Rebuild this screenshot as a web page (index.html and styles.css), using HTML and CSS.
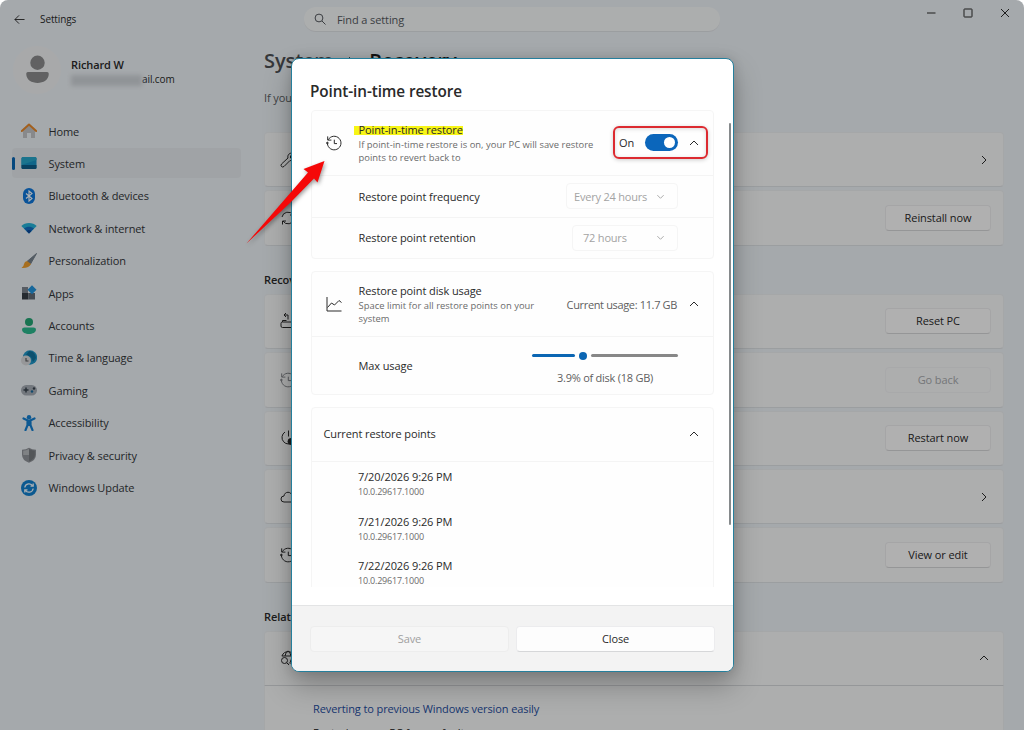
FILE: index.html
```
<!DOCTYPE html>
<html lang="en">
<head>
  <meta charset="UTF-8">
  <meta name="viewport" content="width=device-width, initial-scale=1.0">
  <title>Settings</title>
  <link rel="stylesheet" href="styles.css">
</head>
<body>
  <!-- Shared icons -->
  <svg class="sprite" width="0" height="0">
    <symbol id="up" viewBox="0 0 10 10"><path d="M1 7l4-4 4 4"/></symbol>
    <symbol id="down" viewBox="0 0 10 10"><path d="M1.500 3.500L5 7l3.500-3.500"/></symbol>
    <symbol id="right" viewBox="0 0 10 10"><path d="M3 1l4 4-4 4"/></symbol>
    <symbol id="history" viewBox="0 0 16 16">
      <path d="M2.200 4.800A6.800 6.800 0 1 1 1.400 8.600M1.700 1.400v3.700h3.700M8.300 4.700v3.900h2.700"/>
      <circle cx="1.400" cy="8" r=".8" fill="currentColor"/>
    </symbol>
  </svg>

  <div class="window">
    <header class="titlebar">
      <svg class="line back" viewBox="0 0 12 12"><path d="M11.500 6H1M5.500 1.500L1 6l4.500 4.500"/></svg>
      <span class="app-name">Settings</span>
      <div class="search">
        <svg class="line" viewBox="0 0 12 12"><circle cx="5" cy="5" r="3.900"/><path d="M8 8l3.500 3.500"/></svg>
        <span>Find a setting</span>
      </div>
      <div class="controls">
        <svg class="line" viewBox="0 0 10 10"><path d="M1 5h8.500"/></svg>
        <svg class="line" viewBox="0 0 10 10"><rect x="1" y="1" width="8" height="8" rx=".5"/></svg>
        <svg class="line" viewBox="0 0 10 10"><path d="M1 1l8 8M9 1L1 9"/></svg>
      </div>
    </header>

    <div class="body">
      <aside class="sidebar">
        <div class="profile">
          <div class="avatar">
            <svg viewBox="0 0 26 30"><circle cx="13" cy="8" r="7.500"/><path d="M3 17.500h20q1.700 0 1.700 2C24.700 26 19 29 13 29S1.300 26 1.300 19.500q0-2 1.700-2z"/></svg>
          </div>
          <div class="account">
            <div class="user">Richard W</div>
            <div class="mail"><span class="blurred"></span>ail.com</div>
          </div>
        </div>

        <nav class="nav">
          <a><svg viewBox="0 0 16 16"><path d="M2 7l6-5 6 5v8h-4v-5H6v5H2z" fill="#c3c5c8"/><path d="M.8 8L8 1.500 15.200 8" fill="none" stroke="#e98a2c" stroke-width="2" stroke-linecap="round" stroke-linejoin="round"/></svg>Home</a>
          <a class="active"><svg viewBox="0 0 16 16"><rect x=".5" y="2" width="15" height="12" rx="1.500" fill="#1792c4"/><path d="M.5 10h15v2.500q0 1.500-1.500 1.500H2q-1.500 0-1.500-1.500z" fill="#0e5d8a"/><path d="M2 2h12q1.500 0 1.500 1.500V5L.5 10V3.500Q.5 2 2 2z" fill="#27a6ca"/></svg>System</a>
          <a><svg viewBox="0 0 16 16"><rect x="2" y="0" width="12" height="16" rx="6" fill="#0f78dc"/><path d="M5 5.500l6 5-3 2.500V3l3 2.500-6 5" fill="none" stroke="#fff" stroke-width="1.100"/></svg>Bluetooth &amp; devices</a>
          <a><svg viewBox="0 0 16 16"><path d="M.3 6C4 2 12 2 15.700 6L8 13.500z" fill="#25b4da"/><path d="M3 8.500C6 6 10 6 13 8.500l-5 5z" fill="#146fc4"/><path d="M5.500 11Q8 9 10.500 11L8 13.500z" fill="#0c4a9a"/></svg>Network &amp; internet</a>
          <a><svg viewBox="0 0 16 16"><path d="M15.500.5L9.500 11 6 8.500z" fill="#75818d" stroke="#75818d"/><path d="M6 8l4 3q-2 4.500-9.500 4Q3 13 3 11q.5-2.500 3-3z" fill="#f0a02e"/></svg>Personalization</a>
          <a><svg viewBox="0 0 16 16"><path d="M1 2h6v6H1z" fill="#7d858f"/><path d="M1 8h6.500v6.500H1z" fill="#363d46"/><path d="M7.500 8H14v6.500H7.500z" fill="#626c77"/><path d="M11 .2L15.500 4.700 11 9.200 6.500 4.700z" fill="#2295df"/></svg>Apps</a>
          <a><svg viewBox="0 0 16 16"><circle cx="8" cy="4" r="4" fill="#23a574"/><path d="M3.500 9.500h9q2.500 0 2.500 2c0 3-3.500 4.500-7 4.500s-7-1.500-7-4.500q0-2 2.500-2z" fill="#2bb98f"/></svg>Accounts</a>
          <a><svg viewBox="0 0 16 16"><circle cx="9" cy="7.500" r="7.200" fill="#2097c8"/><path d="M8 1q6 0 7 7l-3 4-2-5-5-2z" fill="#10739f"/><circle cx="5" cy="10.500" r="5" fill="#d7d9dc"/><path d="M5 8v3h2.500" fill="none" stroke="#555" stroke-width="1.100"/></svg>Time &amp; language</a>
          <a><svg viewBox="0 0 16 16"><rect x="0" y="3" width="16" height="10.500" rx="5.200" fill="#a5acb5"/><path d="M2.500 8h5M5 5.500v5" stroke="#39434d" stroke-width="1.500"/><circle cx="11" cy="9.500" r="1.200" fill="#176a9c"/><circle cx="13" cy="6.500" r="1.200" fill="#39434d"/></svg>Gaming</a>
          <a><svg viewBox="0 0 16 16"><circle cx="8" cy="2.300" r="2.200" fill="#1580d2"/><path d="M2.500 3.500L8 6l5.500-2.500M6.500 6v4.200l-2 5M9.500 6v4.200l2 5M8 6v4" fill="none" stroke="#1580d2" stroke-width="2.200" stroke-linecap="round"/></svg>Accessibility</a>
          <a><svg viewBox="0 0 16 16"><path d="M8 .8q3 2 7 2v5q0 5.500-7 8-7-2.500-7-8v-5q4 0 7-2z" fill="#90949a"/><path d="M8 2q3 1.500 5.800 1.800v4.400q0 4-5.800 6.300z" fill="#777b80"/><path d="M8 2Q5 3.500 2.200 3.800V8H8z" fill="#b7babe"/></svg>Privacy &amp; security</a>
          <a><svg viewBox="0 0 16 16"><circle cx="8" cy="8" r="8" fill="#1180cf"/><path d="M3.800 7.500a4.300 4.300 0 0 1 8-1.500M12.200 3.500V6.200H9.500M12.200 8.500a4.300 4.300 0 0 1-8 1.500M3.800 12.500V9.800h2.700" fill="none" stroke="#eef7ff" stroke-width="1.300"/></svg>Windows Update</a>
        </nav>
      </aside>

      <main class="content">
        <h1><span>System</span><svg class="line" viewBox="0 0 10 10"><use href="#right"/></svg><b>Recovery</b></h1>
        <p class="lead">If you're having problems with your PC or want to reset it, these options might help.</p>

        <div class="cards">
          <div class="card"><svg class="line" viewBox="0 0 16 16"><path d="M1.500 12L8 6c-1-3 2-6 5-4.500L10.500 4v2h2L15 3.500c1 3-2 6-5 5L4 14.500Q2.500 15.500 1.500 14.500t0-2.500z"/></svg><svg class="line chev" viewBox="0 0 10 10"><use href="#right"/></svg></div>
          <div class="card"><svg class="line" viewBox="0 0 16 16"><path d="M2 7a6 6 0 0 1 11-2M13.500 1.500V5H10M14 9a6 6 0 0 1-11 2M2.500 14.500V11H6"/></svg><button>Reinstall now</button></div>
        </div>

        <h2>Recovery options</h2>
        <div class="cards">
          <div class="card"><svg class="line" viewBox="0 0 16 16"><rect x="1" y="9" width="14" height="5.500" rx="1.500"/><path d="M2.500 9V7.500h4M8 6.500V2H4M6 0L4 2l2 2"/></svg><button>Reset PC</button></div>
          <div class="card"><svg class="line faded" viewBox="0 0 16 16"><use href="#history"/></svg><button disabled>Go back</button></div>
          <div class="card"><svg class="line" viewBox="0 0 16 16"><path d="M5 2a6.500 6.500 0 1 0 7 0M8.500.5v6"/><circle cx="11" cy="11.500" r="3" fill="currentColor"/></svg><button>Restart now</button></div>
          <div class="card"><svg class="line" viewBox="0 0 16 16"><path d="M4 13a3 3 0 0 1 0-6c.5-5 7.500-5 8 0a3 3 0 0 1 0 6z"/></svg><svg class="line chev" viewBox="0 0 10 10"><use href="#right"/></svg></div>
          <div class="card"><svg class="line" viewBox="0 0 16 16"><use href="#history"/></svg><button>View or edit</button></div>
        </div>

        <h2>Related support</h2>
        <div class="cards">
          <div class="card open"><svg class="line" viewBox="0 0 16 16"><path d="M2 6a6.500 6.500 0 0 1 12.500 1M1.800 6h12.500M5 6q1-5 3-5t3 5M9 13.500q2-1 2-4M14 9q-.5 3-3.500 4.500"/><circle cx="4.500" cy="10.500" r="3"/><path d="M6.700 12.700L9 15"/></svg><svg class="line chev" viewBox="0 0 10 10"><use href="#up"/></svg></div>
          <div class="links">
            <a>Reverting to previous Windows version easily</a>
            <a class="plain">Restoring your PC from a fault</a>
          </div>
        </div>
      </main>
    </div>

    <div class="overlay">
      <div class="dialog">
        <h3>Point-in-time restore</h3>
        <div class="scroll">
          <section class="group">
            <div class="row head">
              <svg class="line icon" viewBox="0 0 16 16"><use href="#history"/></svg>
              <div class="text">
                <div><mark>Point-in-time restore</mark></div>
                <small>If point-in-time restore is on, your PC will save restore<br>points to revert back to</small>
              </div>
              <div class="toggle-box">
                <span>On</span>
                <span class="toggle"></span>
                <svg class="line chev" viewBox="0 0 10 10"><use href="#up"/></svg>
              </div>
            </div>
            <div class="row sub"><span>Restore point frequency</span><div class="select">Every 24 hours<svg class="line" viewBox="0 0 10 10"><use href="#down"/></svg></div></div>
            <div class="row sub"><span>Restore point retention</span><div class="select short">72 hours<svg class="line" viewBox="0 0 10 10"><use href="#down"/></svg></div></div>
          </section>

          <section class="group">
            <div class="row head">
              <svg class="line icon" viewBox="0 0 16 16"><path d="M1 1v14h14.500M1.500 11.500l4-4.500 3 2 4.500-4.500 2.500 2"/></svg>
              <div class="text">
                <div>Restore point disk usage</div>
                <small>Space limit for all restore points on your<br>system</small>
              </div>
              <span class="usage">Current usage: 11.7 GB</span>
              <svg class="line chev" viewBox="0 0 10 10"><use href="#up"/></svg>
            </div>
            <div class="row sub max">
              <span>Max usage</span>
              <div class="limit">
                <div class="slider"><i class="filled"></i><i class="thumb"></i><i class="rest"></i></div>
                <span>3.9% of disk (18 GB)</span>
              </div>
            </div>
          </section>

          <section class="group">
            <div class="row points-head"><span>Current restore points</span><svg class="line chev" viewBox="0 0 10 10"><use href="#up"/></svg></div>
            <div class="points">
              <div><p>7/20/2026 9:26 PM</p><small>10.0.29617.1000</small></div>
              <div><p>7/21/2026 9:26 PM</p><small>10.0.29617.1000</small></div>
              <div><p>7/22/2026 9:26 PM</p><small>10.0.29617.1000</small></div>
            </div>
          </section>
        </div>
        <div class="scrollbar"></div>
        <footer>
          <button disabled>Save</button>
          <button>Close</button>
        </footer>
      </div>
    </div>

    <!-- Callout arrow -->
    <svg class="arrow" viewBox="0 0 90 95"><path d="M3.500 88.500L65 17.500 60.500 14 81.500 6 74.500 27.500 71 23.500 47 48z"/></svg>
  </div>
</body>
</html>
```

FILE: styles.css
```
* {
  box-sizing: border-box;
}

body {
  margin: 0;
  background: #fff;
  color: #2a2a2a;
  font-family: "Open Sans", "Noto Sans", sans-serif;
  font-size: 11px;
  line-height: 15px;
  letter-spacing: -0.1px;
}

h1, h2, h3, p {
  margin: 0;
}

button {
  padding: 0 0 1px;
  font: inherit;
  letter-spacing: inherit;
  color: inherit;
  border: 1px solid #ececee;
  border-bottom-color: #d6d7d9;
  border-radius: 4px;
  background: #fdfdfd;
}

.sprite {
  position: absolute;
}

.line {
  flex: none;
  fill: none;
  stroke: currentColor;
  stroke-width: 1;
}

.window {
  position: relative;
  width: 1024px;
  height: 730px;
  overflow: hidden;
  border-radius: 8px 8px 0 0;
  background: #edf2f6;
}

/* Title bar */
.titlebar {
  display: flex;
  align-items: center;
  height: 39px;
  padding-left: 14px;
}

.back {
  width: 11px;
  height: 11px;
}

.app-name {
  width: 264px;
  margin-left: 15px;
  font-size: 10px;
}

.search {
  display: flex;
  align-items: center;
  gap: 11px;
  width: 416px;
  height: 25px;
  padding-left: 10px;
  border-radius: 12px;
  border-bottom: 1px solid #dfe2e6;
  background: #f7f9fa;
  color: #55595e;
}

.search svg {
  width: 12px;
  height: 12px;
}

.controls {
  display: flex;
  gap: 27px;
  margin: 0 0 13px 206px;
}

.controls svg {
  width: 10px;
  height: 10px;
}

.body {
  display: flex;
}

/* Sidebar */
.sidebar {
  width: 264px;
}

.profile {
  display: flex;
  align-items: center;
  height: 61px;
  padding-left: 13px;
  gap: 10px;
}

.avatar {
  display: flex;
  align-items: center;
  justify-content: center;
  width: 48px;
  height: 48px;
  border-radius: 50%;
  background: #f1f3f4;
}

.avatar svg {
  width: 25px;
  height: 29px;
  fill: #8b8c8d;
}

.account {
  padding-top: 4px;
}

.user {
  font-weight: 600;
}

.mail {
  display: flex;
  font-size: 10px;
}

.blurred {
  width: 71px;
  height: 11px;
  margin-top: 3px;
  background: #cfd4d9;
  filter: blur(2px);
}

.nav {
  display: flex;
  flex-direction: column;
  gap: 2.43px;
  padding: 16px 23px 0 12px;
}

.nav a {
  display: flex;
  align-items: center;
  gap: 11.5px;
  height: 30px;
  padding-left: 9px;
  border-radius: 4px;
  color: #33363a;
}

.nav svg {
  width: 16px;
  height: 16px;
}

.nav .active {
  padding-left: 0;
  background: #e6eaee;
}

.nav .active::before {
  content: "";
  width: 3px;
  height: 13px;
  margin-right: -5.5px;
  border-radius: 2px;
  background: #0a67b5;
}

/* Main column */
.content {
  width: 740px;
}

h1 {
  display: flex;
  align-items: center;
  gap: 13px;
  height: 43px;
  font-size: 20px;
  font-weight: 600;
  color: #4c5054;
}

h1 b {
  font-weight: 600;
  color: #1b1b1b;
}

h1 svg {
  width: 10px;
  height: 10px;
}

.lead {
  margin: 8px 0 27px;
  color: #5b5f63;
}

h2 {
  height: 48px;
  padding-top: 26px;
  font-size: 11px;
  font-weight: 600;
}

.cards {
  display: flex;
  flex-direction: column;
  gap: 3px;
}

.card {
  display: flex;
  align-items: center;
  justify-content: space-between;
  height: 55.4px;
  padding: 0 12px 0 15px;
  border: 1px solid #eceff1;
  border-bottom-color: #dfe2e5;
  border-radius: 4px;
  background: #f8f9fa;
}

.card.open {
  border-bottom-color: #d6d9dc;
  border-radius: 4px 4px 0 0;
}

.card > svg:first-child {
  width: 16px;
  height: 16px;
}

.card button {
  width: 106px;
  height: 26px;
}

.card .chev {
  margin-right: 2px;
}

.chev {
  width: 10px;
  height: 10px;
}

.card > svg.faded {
  color: #85888c;
}

.card button:disabled {
  border-color: #f1f2f4;
  background: #f8f9fa;
  color: #a8aaad;
}

.links {
  display: flex;
  flex-direction: column;
  gap: 9px;
  height: 80px;
  margin-top: -3px;
  padding: 15px 48px;
  border: 1px solid #eceff1;
  border-top: 0;
  background: #f8f9fa;
  color: #1f4ea0;
}

.links .plain {
  color: #1b1b1b;
}

/* Dialog */
.overlay {
  position: absolute;
  inset: 0;
  display: flex;
  align-items: center;
  justify-content: center;
  padding-left: 1px;
  background: rgba(0, 0, 0, 0.3);
}

.dialog {
  position: relative;
  display: flex;
  flex-direction: column;
  width: 443px;
  height: 614px;
  overflow: hidden;
  border: 1px solid #257f9c;
  border-radius: 8px;
  background: #fff;
  box-shadow: 0 14px 28px rgba(0, 0, 0, 0.26), 0 0 12px rgba(0, 0, 0, 0.14);
}

h3 {
  height: 51px;
  padding: 23px 18px 0;
  font-size: 15.3px;
  line-height: 18px;
  font-weight: 600;
}

.scroll {
  display: flex;
  flex-direction: column;
  gap: 12px;
  height: 477px;
  padding: 0 19px 0 18.5px;
  overflow: hidden;
}

.group {
  flex: none;
  border: 1px solid #f5f5f5;
  border-radius: 4px;
  background: #fefefe;
}

.row {
  display: flex;
  align-items: center;
}

.head {
  height: 64px;
  padding: 0 14px;
}

.icon {
  width: 16px;
  height: 16px;
}

.text {
  flex: 1;
  margin: 1px 0 0 17px;
  line-height: 13px;
  white-space: nowrap;
}

.text small {
  display: block;
  margin-top: 2px;
  line-height: 13px;
  letter-spacing: 0.02px;
}

small {
  font-size: 9.4px;
  color: #6b6b6b;
}

mark {
  margin-left: -5px;
  padding-left: 5px;
  background: linear-gradient(#f7f515, #f7f515) 0 60% / 100% 9px no-repeat;
  color: inherit;
}

.toggle-box {
  display: flex;
  align-items: center;
  flex: none;
  gap: 11px;
  width: 95px;
  height: 33px;
  margin: -1px -9px 0 0;
  padding-left: 4px;
  border: 2px solid #dc2a30;
  border-radius: 6px;
  box-shadow: 0 1px 4px rgba(0, 0, 0, 0.2), inset 0 1px 4px rgba(0, 0, 0, 0.15);
}

.toggle {
  display: flex;
  align-items: center;
  justify-content: flex-end;
  width: 33px;
  height: 17px;
  padding-right: 3px;
  border-radius: 9px;
  background: #0b66bb;
}

.toggle::after {
  content: "";
  width: 11px;
  height: 11px;
  border-radius: 50%;
  background: #fff;
}

.sub {
  justify-content: space-between;
  height: 41.5px;
  padding: 0 35px 0 47px;
  border-top: 1px solid #f4f4f4;
}

.select {
  display: flex;
  align-items: center;
  justify-content: space-between;
  width: 112px;
  height: 26px;
  padding: 0 12px 0 7px;
  border: 1px solid #f5f5f5;
  border-radius: 4px;
  color: #a3a3a3;
  letter-spacing: -0.2px;
}

.select.short {
  width: 106px;
  padding-left: 10px;
}

.select svg {
  width: 9px;
  height: 9px;
}

.usage {
  margin-right: 12px;
  color: #5f5f5f;
  letter-spacing: -0.35px;
}

.max {
  height: 58px;
}

.limit {
  display: flex;
  flex-direction: column;
  align-items: center;
  gap: 10px;
  width: 146px;
  padding-top: 5px;
  color: #5f5f5f;
  letter-spacing: -0.25px;
}

.slider {
  display: flex;
  align-items: center;
  gap: 4px;
  width: 146px;
}

.slider i {
  height: 3px;
  border-radius: 2px;
}

.slider .filled {
  width: 43px;
  background: #0b66b3;
}

.slider .thumb {
  width: 8px;
  height: 8px;
  border-radius: 50%;
  background: #0b66b3;
}

.slider .rest {
  flex: 1;
  background: #878787;
}

.points-head {
  justify-content: space-between;
  height: 54px;
  padding: 0 14px 2px 12px;
  border-bottom: 1px solid #f4f4f4;
}

.points {
  display: flex;
  flex-direction: column;
  height: 150px;
  padding: 8px 46.5px;
}

.points div {
  height: 45.4px;
  line-height: 14px;
}

.points small {
  display: block;
  margin-top: 1px;
  font-size: 9px;
  letter-spacing: -0.2px;
}

.scrollbar {
  position: absolute;
  top: 64px;
  right: 2px;
  width: 2px;
  height: 402px;
  border-radius: 1px;
  background: #868a8c;
}

footer {
  display: flex;
  gap: 7px;
  height: 66px;
  margin-top: auto;
  padding: 20px 18px 0;
  border-top: 1px solid #e3e4e5;
  background: #f3f3f3;
}

footer button {
  flex: 1;
  height: 26px;
}

footer button:disabled {
  border-color: #ededed;
  background: #f6f6f6;
  color: #a0a0a0;
}

.arrow {
  position: absolute;
  left: 243px;
  top: 155px;
  width: 90px;
  height: 95px;
  fill: #f50808;
  filter: drop-shadow(1px 2px 2px rgba(0, 0, 0, 0.4));
}
```
